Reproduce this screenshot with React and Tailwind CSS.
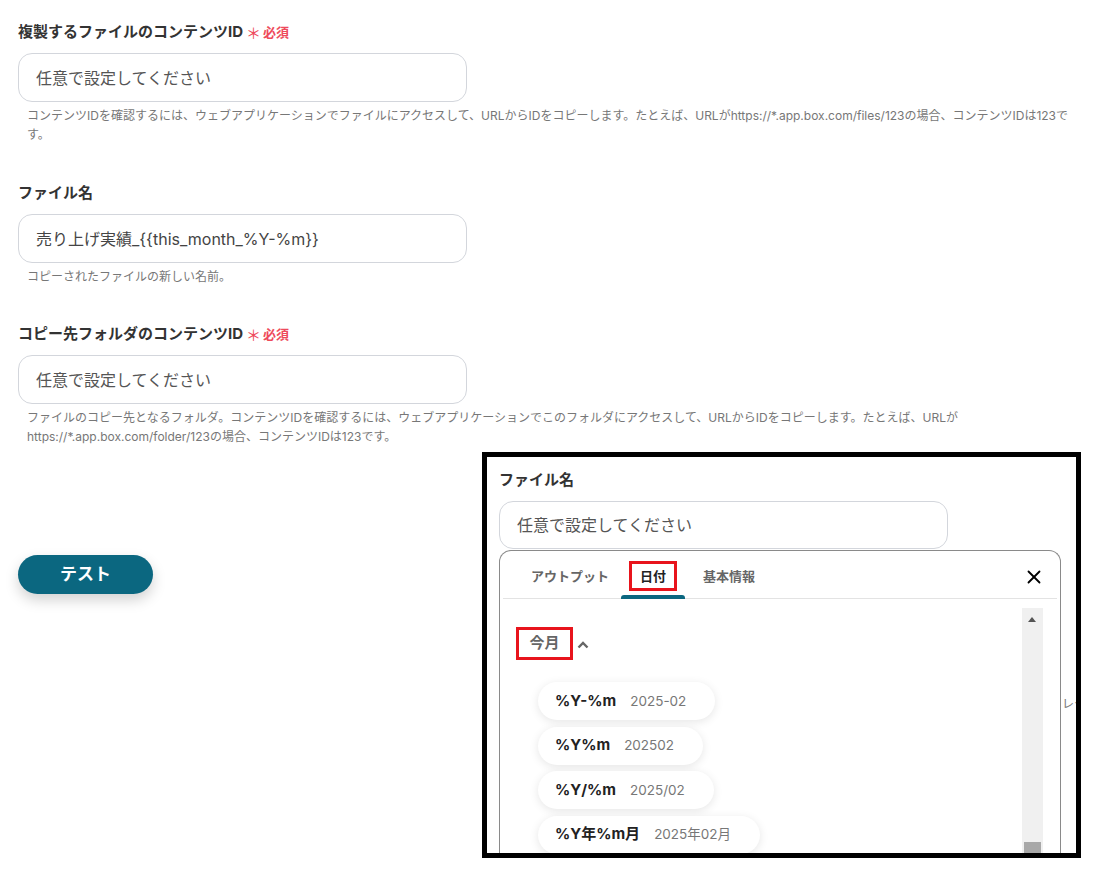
import { X } from 'lucide-react'

const font = "font-['Inter','Noto_Sans_CJK_JP',sans-serif]"

export default function App() {
  return (
    <div className={`relative w-[1100px] h-[881px] bg-white overflow-hidden ${font}`}>
      {/* Main form */}
      <div className="pl-[18px] pr-[20px] pt-[21px]">
        <Field
          label="複製するファイルのコンテンツID"
          required
          value="任意で設定してください"
          help="コンテンツIDを確認するには、ウェブアプリケーションでファイルにアクセスして、URLからIDをコピーします。たとえば、URLがhttps://*.app.box.com/files/123の場合、コンテンツIDは123です。"
        />
        <div className="h-[38px]" />
        <Field
          label="ファイル名"
          value="売り上げ実績_{{this_month_%Y-%m}}"
          filled
          help="コピーされたファイルの新しい名前。"
        />
        <div className="h-[37px]" />
        <Field
          label="コピー先フォルダのコンテンツID"
          required
          value="任意で設定してください"
          help={
            <>
              ファイルのコピー先となるフォルダ。コンテンツIDを確認するには、ウェブアプリケーションでこのフォルダにアクセスして、URLからIDをコピーします。たとえば、URLが
              <br />
              https://*.app.box.com/folder/123の場合、コンテンツIDは123です。
            </>
          }
        />
        <button className="mt-[109px] w-[135px] h-[39px] rounded-full bg-[#0b6780] text-white text-[17px] font-semibold shadow-[0_6px_14px_rgba(0,0,0,0.18)]">
          テスト
        </button>
      </div>

      {/* Zoomed inset */}
      <div className="absolute left-[482px] top-[452px] w-[599px] h-[406px] border-[5px] border-black bg-white overflow-hidden">
        <span className="absolute left-[575px] top-[238px] text-[12px] text-[#777] whitespace-nowrap">レター</span>
        <div className="pl-[12px] pt-[12px]">
          <div className="text-[15px] font-bold text-[#333] leading-[22px]">ファイル名</div>
          <div className="mt-[10px] w-[449px] h-[48px] rounded-[14px] border border-[#d3d6dc] flex items-center pl-[17px] text-[16px] text-[#555]">
            任意で設定してください
          </div>
          <div className="mt-[1px] w-[562px] h-[320px] rounded-t-[12px] border border-[#8a8a8a] border-b-0">
            <div className="relative flex h-[48px] border-b border-[#e3e3e3] mx-[3px]">
              <div className="flex items-center h-full pt-[4px] pl-[28px] pr-[12px]">
                <span className="text-[13px] font-bold text-[#666]">アウトプット</span>
              </div>
              <div className="relative px-[19px] pt-[4px] flex items-center h-full">
                <span className="text-[13px] font-bold text-[#222]">日付</span>
                <div className="absolute left-[8px] top-[10px] w-[48px] h-[30px] border-[3px] border-[#e8141c]" />
                <div className="absolute left-0 right-0 bottom-[-1px] h-[4px] rounded-t-[3px] bg-[#0b6780]" />
              </div>
              <div className="flex items-center h-full pt-[4px] pl-[18px]">
                <span className="text-[13px] font-bold text-[#666]">基本情報</span>
              </div>
              <X className="absolute right-[12px] top-[15px] w-[22px] h-[22px] text-black" strokeWidth={2} />
            </div>
            <div className="flex">
              <div className="flex-1 pl-[16px] pt-[28px]">
                <div className="flex items-center gap-[3px]">
                  <div className="w-[57px] h-[33px] border-[3px] border-[#e8141c] flex items-center justify-center text-[15px] font-bold text-[#666]">
                    今月
                  </div>
                  <svg width="14" height="14" viewBox="0 0 14 14" className="text-[#666] mt-[3px]">
                    <path d="M2.5 9.5 L7 5 L11.5 9.5" fill="none" stroke="currentColor" strokeWidth="2.4" />
                  </svg>
                </div>
                <div className="mt-[22px] pl-[22px] flex flex-col gap-[6.5px] items-start">
                  <Chip k="%Y-%m" v="2025-02" />
                  <Chip k="%Y%m" v="202502" />
                  <Chip k="%Y/%m" v="2025/02" />
                  <Chip k="%Y年%m月" v="2025年02月" />
                </div>
              </div>
              <div className="relative mt-[9px] mr-[17px] w-[21px] h-[260px] bg-[#f0f0f0]">
                <div className="absolute left-[6px] top-[9px] w-0 h-0 border-l-[4px] border-r-[4px] border-b-[5px] border-l-transparent border-r-transparent border-b-[#555]" />
                <div className="absolute left-[2px] top-[234px] w-[17px] h-[20px] bg-[#a8a8a8]" />
              </div>
            </div>
          </div>
        </div>
      </div>
    </div>
  )
}

function Field({ label, required, value, filled, help }) {
  return (
    <div>
      <div className="flex items-center text-[15px] leading-[22px] font-bold text-[#333]">
        {label}
        {required && (
          <span className="ml-[3px] flex items-center text-[#ee4a5b] text-[13px] font-bold">
            <span className="text-[15px] font-normal mr-[2px] mt-[3px] leading-none">＊</span>必須
          </span>
        )}
      </div>
      <div
        className={`mt-[10px] w-[449px] h-[49px] rounded-[14px] border border-[#d3d6dc] flex items-center pl-[17px] text-[16px] ${
          filled ? 'text-[#444]' : 'text-[#555]'
        }`}
      >
        {value}
      </div>
      <p className="mt-[4px] pl-[9px] text-[12px] leading-[19px] text-[#777]">{help}</p>
    </div>
  )
}

function Chip({ k, v }) {
  return (
    <div className="h-[38px] rounded-full bg-white shadow-[0_2px_10px_rgba(0,0,0,0.10)] flex items-center pl-[17px] pr-[29px]">
      <span className="text-[15px] font-bold text-[#222]">{k}</span>
      <span className="ml-[14px] text-[13.5px] text-[#777]">{v}</span>
    </div>
  )
}
